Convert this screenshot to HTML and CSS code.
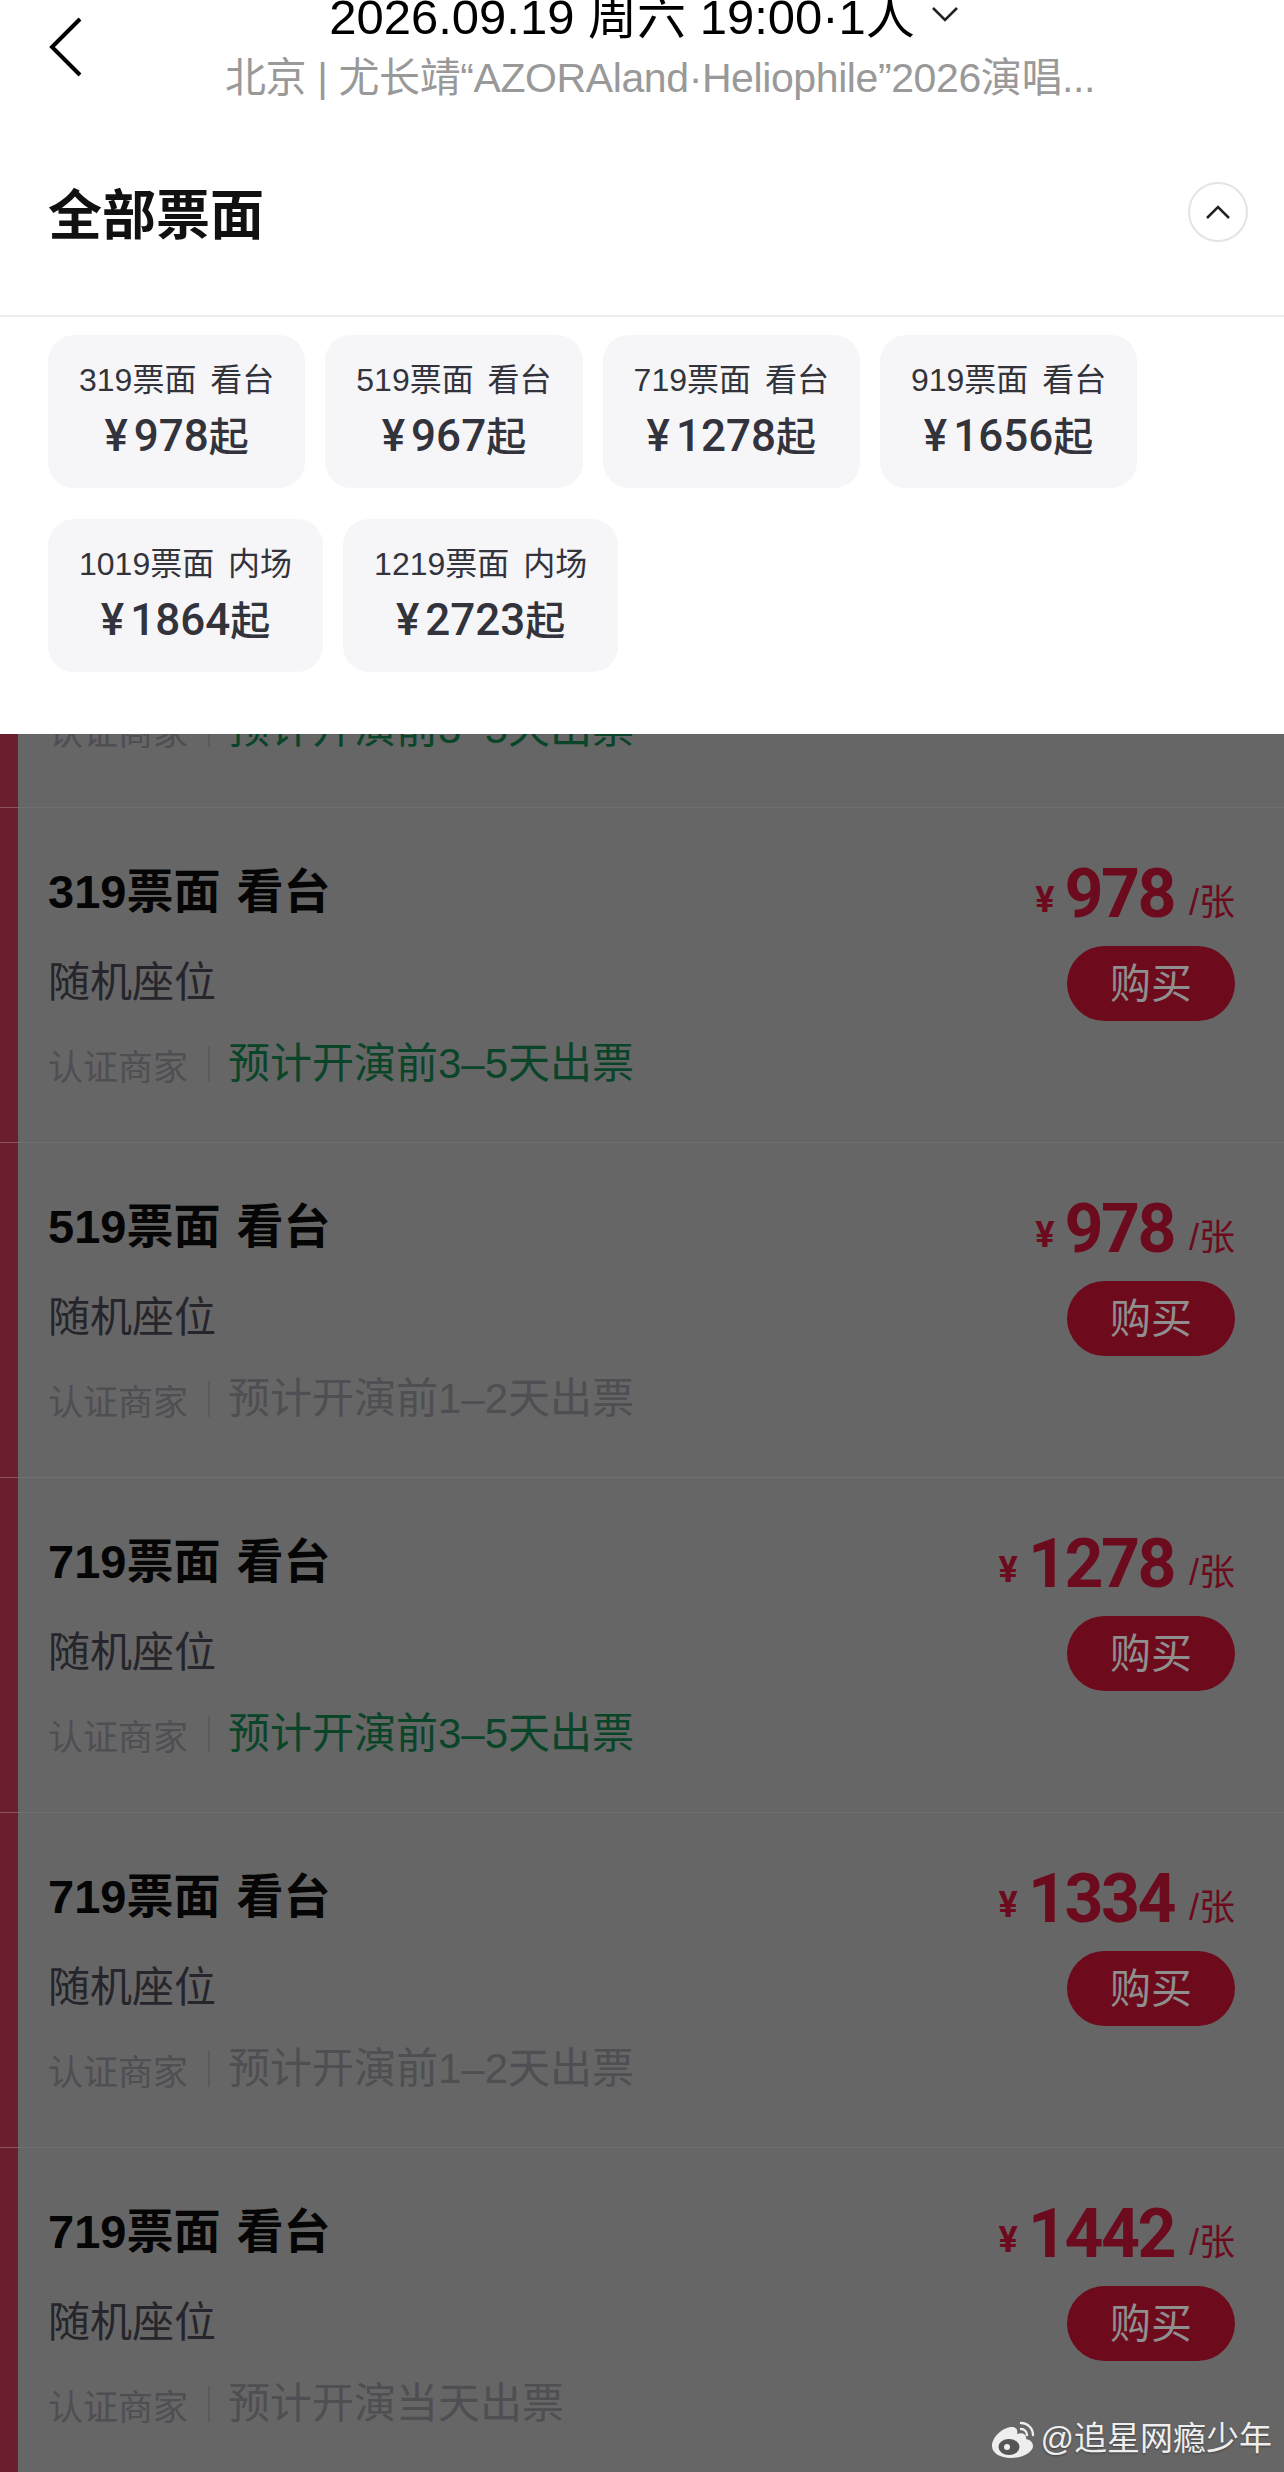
FILE: index.html
```html
<!DOCTYPE html>
<html lang="zh-CN">
<head>
    <meta charset="UTF-8">
    <meta name="viewport" content="width=device-width, initial-scale=1.0">
    <title>全部票面</title>
    <link rel="stylesheet" href="styles.css">
</head>
<body>
    <div class="sheet">
        <div class="topbar">
            <svg class="back" width="36" height="60" viewBox="0 0 36 60"><path d="M32 2 L4 30 L32 58" fill="none" stroke="#000" stroke-width="4"/></svg>
            <div class="topbar-text">
                <div class="date">2026.09.19 周六 19:00·1人<svg class="date-arrow" width="28" height="16" viewBox="0 0 28 16"><path d="M2 2 L14 14 L26 2" fill="none" stroke="#222" stroke-width="2.6"/></svg></div>
                <div class="venue">北京 | 尤长靖“AZORAland·Heliophile”2026演唱...</div>
            </div>
        </div>

        <div class="section-head">
            <h1>全部票面</h1>
            <div class="collapse">
                <svg width="26" height="16" viewBox="0 0 26 16"><path d="M2 14 L13 3 L24 14" fill="none" stroke="#222" stroke-width="2.5"/></svg>
            </div>
        </div>

        <div class="chips">
            <div class="chip"><div class="chip-name">319票面 看台</div><div class="chip-price"><span class="chip-yen">¥</span>978<span class="chip-from">起</span></div></div>
            <div class="chip"><div class="chip-name">519票面 看台</div><div class="chip-price"><span class="chip-yen">¥</span>967<span class="chip-from">起</span></div></div>
            <div class="chip"><div class="chip-name">719票面 看台</div><div class="chip-price"><span class="chip-yen">¥</span>1278<span class="chip-from">起</span></div></div>
            <div class="chip"><div class="chip-name">919票面 看台</div><div class="chip-price"><span class="chip-yen">¥</span>1656<span class="chip-from">起</span></div></div>
            <div class="chip"><div class="chip-name">1019票面 内场</div><div class="chip-price"><span class="chip-yen">¥</span>1864<span class="chip-from">起</span></div></div>
            <div class="chip"><div class="chip-name">1219票面 内场</div><div class="chip-price"><span class="chip-yen">¥</span>2723<span class="chip-from">起</span></div></div>
        </div>
    </div>

    <div class="list">
        <div class="row">
            <div class="bar"></div>
            <div class="row-body">
                <div class="info">
                    <div class="meta meta-tail"><span class="seller">认证商家</span><span class="ship green">预计开演前3–5天出票</span></div>
                </div>
            </div>
        </div>
        <div class="row">
            <div class="bar"></div>
            <div class="row-body">
                <div class="info">
                    <div class="name">319票面 看台</div>
                    <div class="seat">随机座位</div>
                    <div class="meta"><span class="seller">认证商家</span><span class="ship green">预计开演前3–5天出票</span></div>
                </div>
                <div class="buy">
                    <div class="price"><span class="yen">¥</span><span class="amount">978</span><span class="unit">/张</span></div>
                    <div class="buy-btn">购买</div>
                </div>
            </div>
        </div>
        <div class="row">
            <div class="bar"></div>
            <div class="row-body">
                <div class="info">
                    <div class="name">519票面 看台</div>
                    <div class="seat">随机座位</div>
                    <div class="meta"><span class="seller">认证商家</span><span class="ship">预计开演前1–2天出票</span></div>
                </div>
                <div class="buy">
                    <div class="price"><span class="yen">¥</span><span class="amount">978</span><span class="unit">/张</span></div>
                    <div class="buy-btn">购买</div>
                </div>
            </div>
        </div>
        <div class="row">
            <div class="bar"></div>
            <div class="row-body">
                <div class="info">
                    <div class="name">719票面 看台</div>
                    <div class="seat">随机座位</div>
                    <div class="meta"><span class="seller">认证商家</span><span class="ship green">预计开演前3–5天出票</span></div>
                </div>
                <div class="buy">
                    <div class="price"><span class="yen">¥</span><span class="amount">1278</span><span class="unit">/张</span></div>
                    <div class="buy-btn">购买</div>
                </div>
            </div>
        </div>
        <div class="row">
            <div class="bar"></div>
            <div class="row-body">
                <div class="info">
                    <div class="name">719票面 看台</div>
                    <div class="seat">随机座位</div>
                    <div class="meta"><span class="seller">认证商家</span><span class="ship">预计开演前1–2天出票</span></div>
                </div>
                <div class="buy">
                    <div class="price"><span class="yen">¥</span><span class="amount">1334</span><span class="unit">/张</span></div>
                    <div class="buy-btn">购买</div>
                </div>
            </div>
        </div>
        <div class="row">
            <div class="bar"></div>
            <div class="row-body">
                <div class="info">
                    <div class="name">719票面 看台</div>
                    <div class="seat">随机座位</div>
                    <div class="meta"><span class="seller">认证商家</span><span class="ship">预计开演当天出票</span></div>
                </div>
                <div class="buy">
                    <div class="price"><span class="yen">¥</span><span class="amount">1442</span><span class="unit">/张</span></div>
                    <div class="buy-btn">购买</div>
                </div>
            </div>
        </div>
    </div>

    <div class="watermark">
        <svg width="46" height="40" viewBox="0 0 46 40">
            <path d="M2 27 C2 18 13 8 22 8 C27 8 28 12 27 15 C32 13 37 15 36 20 C41 21 43 24 43 27 C43 33 33 39 21 39 C10 39 2 34 2 27 Z" fill="#eee"/>
            <ellipse cx="19" cy="28" rx="10.5" ry="8" fill="#555"/>
            <circle cx="17" cy="28" r="3" fill="#eee"/>
            <path d="M31 10 A6 6 0 0 1 37 16 M31 4 A12 12 0 0 1 43 16" fill="none" stroke="#eee" stroke-width="2.4" stroke-linecap="round"/>
        </svg>
        <span>@追星网瘾少年</span>
    </div>
</body>
</html>
```

FILE: styles.css
```css
html, body {
    margin: 0;
    padding: 0;
    height: 2472px;
    overflow: hidden;
}

body {
    position: relative;
    font-family: "Liberation Sans", "Noto Sans CJK SC", sans-serif;
    background: #666;
}

.sheet {
    position: relative;
    z-index: 1;
    height: 734px;
    box-sizing: border-box;
    background: #fff;
}

.topbar {
    display: flex;
    height: 108px;
}

.back {
    flex: none;
    margin: 17px 0 0 48px;
}

.topbar-text {
    flex: 1;
    display: flex;
    flex-direction: column;
    align-items: center;
    padding-right: 80px;
}

.date {
    margin-top: -10px;
    font-size: 49px;
    line-height: 54px;
    color: #000;
    white-space: nowrap;
}

.date-arrow {
    margin-left: 16px;
    vertical-align: 12px;
}

.venue {
    margin: 8px 0 0 32px;
    font-size: 41px;
    letter-spacing: -0.4px;
    line-height: 52px;
    color: #999;
    white-space: nowrap;
}

.section-head {
    display: flex;
    align-items: center;
    justify-content: space-between;
    height: 209px;
    box-sizing: border-box;
    padding: 0 36px 0 48px;
    border-bottom: 2px solid #eee;
}

h1 {
    margin: 0;
    font-size: 54px;
    font-weight: 700;
    color: #111;
}

.collapse {
    display: flex;
    align-items: center;
    justify-content: center;
    width: 60px;
    height: 60px;
    box-sizing: border-box;
    border: 2px solid #e4e4e4;
    border-radius: 50%;
}

.chips {
    display: flex;
    flex-wrap: wrap;
    gap: 31px 20px;
    padding: 18px 48px 0;
}

.chip {
    height: 153px;
    box-sizing: border-box;
    padding: 24px 31px 0;
    border-radius: 26px;
    background: #f6f6f9;
    color: #33333b;
    text-align: center;
}

.chip-name {
    font-size: 32px;
    word-spacing: 5px;
    line-height: 42px;
    white-space: nowrap;
}

.chip-price {
    margin-top: 10px;
    font-family: Roboto, "Noto Sans CJK SC", sans-serif;
    font-size: 44px;
    font-weight: 500;
    line-height: 50px;
    white-space: nowrap;
}

.chip-yen {
    margin-right: 6px;
}

.chip-from {
    font-size: 40px;
}

.list {
    height: 1738px;
    overflow: hidden;
}

.row {
    display: flex;
    height: 335px;
}

.row:first-child {
    margin-top: -262px;
}

.bar {
    flex: none;
    width: 18px;
    background: #6b1f2e;
    border-top: 1px solid #8b5560;
}

.row-body {
    flex: 1;
    display: flex;
    justify-content: space-between;
    box-sizing: border-box;
    padding: 0 49px 0 30px;
    border-top: 1px solid #707070;
}

.info {
    padding-top: 53px;
}

.name {
    font-size: 47px;
    font-weight: 700;
    word-spacing: 3px;
    line-height: 62px;
    color: #050505;
}

.seat {
    margin-top: 32px;
    font-size: 42px;
    line-height: 56px;
    color: #25252b;
}

.meta {
    display: flex;
    align-items: center;
    margin-top: 28px;
    height: 50px;
}

.meta-tail {
    margin-top: 178px;
}

.seller {
    display: flex;
    align-items: center;
    height: 36px;
    padding-right: 20px;
    border-right: 2px solid #5a5a5c;
    font-size: 35px;
    color: #4e4e53;
}

.ship {
    margin-left: 18px;
    font-size: 42px;
    line-height: 50px;
    color: #4e4e53;
}

.ship.green {
    color: #0b4529;
}

.buy {
    display: flex;
    flex-direction: column;
    align-items: flex-end;
    padding-top: 53px;
}

.price {
    height: 67px;
    line-height: 67px;
    color: #6d0b1e;
    font-family: Roboto, "Noto Sans CJK SC", sans-serif;
    white-space: nowrap;
}

.yen {
    margin-right: 10px;
    font-size: 36px;
    font-weight: 700;
    vertical-align: 5px;
}

.amount {
    font-size: 68px;
    font-weight: 700;
    letter-spacing: -2.5px;
}

.unit {
    margin-left: 15px;
    font-family: "Liberation Sans", "Noto Sans CJK SC", sans-serif;
    font-size: 36px;
    vertical-align: 2px;
}

.buy-btn {
    width: 168px;
    height: 75px;
    margin-top: 18px;
    border-radius: 38px;
    background: #6d0b1c;
    color: #8f8f8f;
    font-size: 41px;
    line-height: 77px;
    text-align: center;
}

.watermark {
    position: absolute;
    right: 12px;
    bottom: 11px;
    z-index: 2;
    display: flex;
    align-items: center;
    gap: 5px;
    color: #eee;
    font-size: 33px;
    line-height: 44px;
    text-shadow: 0 1px 2px rgba(0, 0, 0, 0.4);
}
```
